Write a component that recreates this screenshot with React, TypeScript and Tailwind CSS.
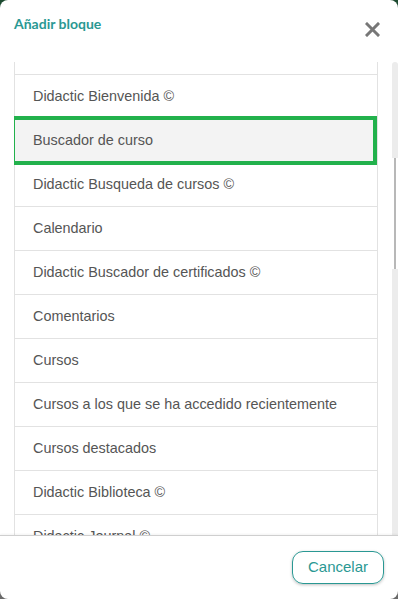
import React from 'react'

const blocks = [
  'Actividades',
  'Didactic Bienvenida ©',
  'Buscador de curso',
  'Didactic Busqueda de cursos ©',
  'Calendario',
  'Didactic Buscador de certificados ©',
  'Comentarios',
  'Cursos',
  'Cursos a los que se ha accedido recientemente',
  'Cursos destacados',
  'Didactic Biblioteca ©',
  'Didactic Journal ©',
  'Eventos próximos',
]

const SELECTED = 'Buscador de curso'

function CloseIcon() {
  return (
    <svg width="15" height="15" viewBox="0 0 15 15" aria-hidden="true">
      <path d="M2 2 L13 13 M13 2 L2 13" stroke="#777" strokeWidth="3" strokeLinecap="square" />
    </svg>
  )
}

export default function App() {
  return (
    <div className="h-[599px] w-[398px] bg-gradient-to-b from-[#1c4a30] to-[#6a6a6a]">
      <div className="flex h-full flex-col overflow-hidden rounded-[8px] bg-white font-['Liberation_Sans',Arial,sans-serif]">
        {/* Header */}
        <div className="flex h-[62px] shrink-0 items-start justify-between pl-[14px] pr-[18px]">
          <h2 className="pt-[13px] font-['Lato',sans-serif] text-[14px] font-bold text-[#2a9893]">
            Añadir bloque
          </h2>
          <button className="mt-[22px]" aria-label="Cerrar">
            <CloseIcon />
          </button>
        </div>

        {/* Body */}
        <div className="flex min-h-0 flex-1 pl-[14px]">
          <div className="min-h-0 w-[364px] overflow-hidden">
            <ul className="-mt-[31px] border-x border-[#e2e2e2]">
              {blocks.map((name) => (
                <li
                  key={name}
                  className={
                    name === SELECTED
                      ? 'relative flex h-[44px] items-center border-b border-[#e2e2e2] bg-[#f3f3f3] pl-[18px] text-[14.4px] text-[#555]'
                      : 'flex h-[44px] items-center border-b border-[#e2e2e2] pl-[18px] text-[14.4px] text-[#555]'
                  }
                >
                  {name}
                  {name === SELECTED && (
                    <span className="pointer-events-none absolute -bottom-[3px] -left-[4px] -top-[3px] right-0 border-[4px] border-[#22b14c]" />
                  )}
                </li>
              ))}
            </ul>
          </div>
          {/* Scrollbar */}
          <div className="ml-[14px] flex w-[6px] flex-col">
            <div className="h-[96px] rounded-t-[3px] bg-[#ececec]" />
            <div className="flex h-[111px] pl-[2px]">
              <div className="w-[2px] bg-[#b8b8b8]" />
            </div>
            <div className="flex-1 bg-[#ececec]" />
          </div>
        </div>

        {/* Footer */}
        <div className="flex h-[64px] shrink-0 items-start justify-end border-t border-[#cfcfcf] pr-[14px] pt-[15px] shadow-[0_-1px_2px_rgba(0,0,0,0.05)]">
          <button className="h-[33px] w-[92px] rounded-[11px] border border-[#2a9893] text-[15px] text-[#2a9893] shadow-[0_1px_3px_rgba(0,0,0,0.25)]">
            Cancelar
          </button>
        </div>
      </div>
    </div>
  )
}
